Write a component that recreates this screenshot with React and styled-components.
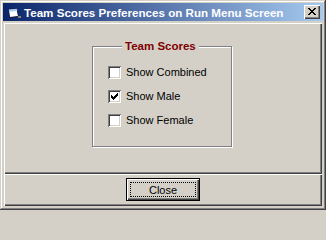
import React from "react";
import styled, { createGlobalStyle } from "styled-components";

const GlobalStyle = createGlobalStyle`
  body {
    margin: 0;
    background: #d4d0c8;
    font-family: "Liberation Sans", Arial, sans-serif;
  }
`;

// draws a tiny bitmap glyph from rows of "X" / "."
const Pixels = ({ rows, color = "#000", w, h }) => (
  <svg width={w} height={h} viewBox={`0 0 ${w} ${h}`} shapeRendering="crispEdges">
    <g fill={color}>
      {rows.flatMap((r, y) =>
        [...r].map((c, x) =>
          c === "X" ? <rect key={`${x}-${y}`} x={x} y={y} width="1" height="1" /> : null
        )
      )}
    </g>
  </svg>
);

const CLOSE_X = [
  "XX....XX",
  ".XX..XX.",
  "..XXXX..",
  "...XX...",
  "..XXXX..",
  ".XX..XX.",
  "XX....XX",
];

const CHECK = [
  "......X",
  ".....XX",
  "X...XXX",
  "XX.XXX.",
  "XXXXX..",
  ".XXX...",
  "..X....",
];

const options = [
  { label: "Show Combined", checked: false },
  { label: "Show Male", checked: true },
  { label: "Show Female", checked: false },
];

function App() {
  return (
    <>
      <GlobalStyle />
      <Window>
        <TitleBar>
          <TitleIcon>
            <svg width="14" height="12" viewBox="0 0 14 12">
              <path d="M1.5 2.5 L10 1.5 L11.5 9.5 L2.5 10.5 Z" fill="#fff" stroke="#0a1040" />
              <path d="M1.8 2.6 L10 1.7 L10.4 4 L2.2 4.8 Z" fill="#a6caf0" />
              <rect x="11" y="9" width="3" height="2" fill="#808080" />
            </svg>
          </TitleIcon>
          <TitleText>Team Scores Preferences on Run Menu Screen</TitleText>
          <CloseBox>
            <Pixels rows={CLOSE_X} w={8} h={7} />
          </CloseBox>
        </TitleBar>
        <Panel>
          <GroupBox>
            <Legend>Team Scores</Legend>
            <OptionList>
              {options.map((o) => (
                <OptionRow key={o.label}>
                  <CheckBox>
                    {o.checked && <Pixels rows={CHECK} w={7} h={7} />}
                  </CheckBox>
                  <OptionLabel>{o.label}</OptionLabel>
                </OptionRow>
              ))}
            </OptionList>
          </GroupBox>
        </Panel>
        <ButtonPanel>
          <Button>
            <FocusRing>Close</FocusRing>
          </Button>
        </ButtonPanel>
      </Window>
    </>
  );
}

export default App;

const Window = styled.div`
  width: 326px;
  height: 210px;
  box-sizing: border-box;
  padding: 3px 3px 4px 3px;
  background: #d4d0c8;
  box-shadow: inset -1px -1px #404040, inset 1px 1px #d4d0c8,
    inset -2px -2px #808080, inset 2px 2px #ffffff;
  display: flex;
  flex-direction: column;
`;

const TitleBar = styled.div`
  height: 18px;
  flex: none;
  display: flex;
  align-items: center;
  padding: 0 3px 0 4px;
  background: linear-gradient(to right, #0a246a, #a6caf0);
`;

const TitleIcon = styled.div`
  width: 14px;
  height: 12px;
  display: flex;
  margin-top: 2px;
  > svg {
    display: block;
  }
`;

const TitleText = styled.div`
  flex: 1;
  margin-left: 3px;
  padding-top: 2px;
  color: #fff;
  font-weight: bold;
  font-size: 11.6px;
  line-height: 16px;
  white-space: nowrap;
`;

const CloseBox = styled.div`
  width: 16px;
  height: 14px;
  box-sizing: border-box;
  display: flex;
  align-items: center;
  justify-content: center;
  padding: 0 1px 1px 0;
  background: #d4d0c8;
  box-shadow: inset 1px 1px #fff, inset -1px -1px #404040,
    inset -2px -2px #808080;
  > svg {
    display: block;
  }
`;

const Panel = styled.div`
  height: 151px;
  flex: none;
  margin: 2px 1px 0;
  padding-top: 17px;
  box-sizing: border-box;
  box-shadow: inset 1px 1px #fff, inset -1px -1px #404040,
    inset -2px -2px #808080;
  display: flex;
  align-items: flex-start;
`;

const GroupBox = styled.fieldset`
  width: 140px;
  height: 107px;
  box-sizing: border-box;
  margin: 0 0 0 88px;
  padding: 0 0 0 15px;
  min-width: 0;
  border: 1px solid #808080;
  box-shadow: 1px 1px 0 #fff, inset 1px 1px 0 #fff;
`;

const Legend = styled.legend`
  margin-left: 14px;
  padding: 0 3px;
  background: #d4d0c8;
  color: #800000;
  font-weight: bold;
  font-size: 11.5px;
  line-height: 13px;
`;

const OptionList = styled.div`
  display: flex;
  flex-direction: column;
  gap: 11px;
  padding-top: 13px;
`;

const OptionRow = styled.div`
  display: flex;
  align-items: center;
  height: 13px;
  gap: 5px;
`;

const CheckBox = styled.div`
  width: 13px;
  height: 13px;
  flex: none;
  box-sizing: border-box;
  padding: 3px;
  background: #fff;
  box-shadow: inset 1px 1px #808080, inset -1px -1px #fff,
    inset 2px 2px #404040, inset -2px -2px #d4d0c8;
  > svg {
    display: block;
  }
`;

const OptionLabel = styled.span`
  font-size: 11px;
  line-height: 13px;
  color: #000;
`;

const ButtonPanel = styled.div`
  flex: 1;
  margin: 0 1px;
  padding-top: 4px;
  box-sizing: border-box;
  box-shadow: inset 1px 1px #fff, inset -1px -1px #404040,
    inset -2px -2px #808080;
  display: flex;
  justify-content: center;
  align-items: flex-start;
`;

const Button = styled.button`
  width: 74px;
  height: 23px;
  box-sizing: border-box;
  padding: 3px;
  margin: 0;
  border: 1px solid #000;
  background: #d4d0c8;
  box-shadow: inset 1px 1px #fff, inset -1px -1px #404040,
    inset -2px -2px #808080;
  display: flex;
  font-family: "Liberation Sans", Arial, sans-serif;
`;

const FocusRing = styled.span`
  flex: 1;
  display: flex;
  align-items: center;
  justify-content: center;
  border: 1px dotted #000;
  font-size: 11px;
  color: #000;
`;
